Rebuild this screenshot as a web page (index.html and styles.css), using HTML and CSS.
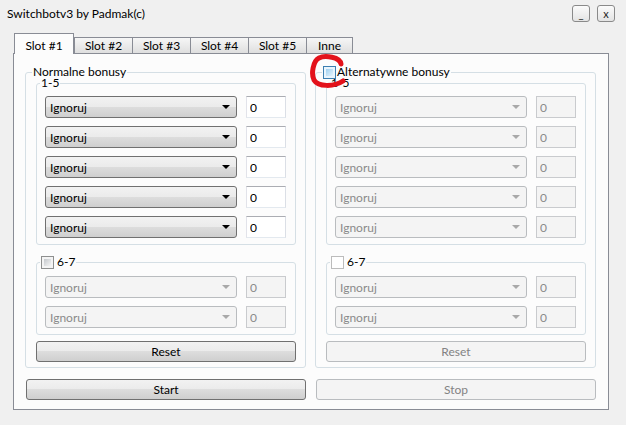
FILE: index.html
```html
<!DOCTYPE html>
<html lang="pl">
<head>
    <meta charset="UTF-8">
    <title>Switchbotv3 by Padmak(c)</title>
    <link rel="stylesheet" href="styles.css">
</head>
<body>
    <div class="titlebar">
        <span class="title">Switchbotv3 by Padmak(c)</span>
        <div class="win-buttons">
            <button class="win-btn">_</button>
            <button class="win-btn">x</button>
        </div>
    </div>

    <div class="tabs">
        <div class="tab active">Slot #1</div>
        <div class="tab">Slot #2</div>
        <div class="tab">Slot #3</div>
        <div class="tab">Slot #4</div>
        <div class="tab">Slot #5</div>
        <div class="tab short">Inne</div>
    </div>

    <div class="panel">
        <!-- Normal bonuses -->
        <div class="column">
            <fieldset class="group">
                <legend>Normalne bonusy</legend>
                <fieldset class="group sub">
                    <legend>1-5</legend>
                    <div class="row"><div class="combo">Ignoruj</div><input class="num" value="0"></div>
                    <div class="row"><div class="combo">Ignoruj</div><input class="num" value="0"></div>
                    <div class="row"><div class="combo">Ignoruj</div><input class="num" value="0"></div>
                    <div class="row"><div class="combo">Ignoruj</div><input class="num" value="0"></div>
                    <div class="row"><div class="combo">Ignoruj</div><input class="num" value="0"></div>
                </fieldset>
                <fieldset class="group sub extra">
                    <legend><span class="check"></span>6-7</legend>
                    <div class="row"><div class="combo off">Ignoruj</div><input class="num" value="0" disabled></div>
                    <div class="row"><div class="combo off">Ignoruj</div><input class="num" value="0" disabled></div>
                </fieldset>
                <button class="btn">Reset</button>
            </fieldset>
            <button class="btn wide">Start</button>
        </div>

        <!-- Alternative bonuses -->
        <div class="column">
            <fieldset class="group">
                <legend class="tight"><span class="check hover"><svg class="mark" width="36" height="34" viewBox="0 0 36 34"><path d="M31 10 C30 3 15 1 9 4 C3 7 1 20 4 26 C8 33 24 33 33 27" fill="none" stroke="#e3121b" stroke-width="5" stroke-linecap="round"/></svg></span>Alternatywne bonusy</legend>
                <fieldset class="group sub">
                    <legend>1-5</legend>
                    <div class="row"><div class="combo off">Ignoruj</div><input class="num" value="0" disabled></div>
                    <div class="row"><div class="combo off">Ignoruj</div><input class="num" value="0" disabled></div>
                    <div class="row"><div class="combo off">Ignoruj</div><input class="num" value="0" disabled></div>
                    <div class="row"><div class="combo off">Ignoruj</div><input class="num" value="0" disabled></div>
                    <div class="row"><div class="combo off">Ignoruj</div><input class="num" value="0" disabled></div>
                </fieldset>
                <fieldset class="group sub extra">
                    <legend><span class="check off"></span>6-7</legend>
                    <div class="row"><div class="combo off">Ignoruj</div><input class="num" value="0" disabled></div>
                    <div class="row"><div class="combo off">Ignoruj</div><input class="num" value="0" disabled></div>
                </fieldset>
                <button class="btn" disabled>Reset</button>
            </fieldset>
            <button class="btn wide" disabled>Stop</button>
        </div>
    </div>
</body>
</html>
```

FILE: styles.css
```css
* {
    box-sizing: border-box;
}

body {
    margin: 0;
    width: 626px;
    height: 425px;
    overflow: hidden;
    background-color: #f0f0f0;
    font-family: Lato, "Liberation Sans", sans-serif;
    font-size: 12px;
    color: #000;
}

.titlebar {
    display: flex;
    justify-content: space-between;
    align-items: center;
    height: 27px;
    padding: 0 11px 0 7px;
}

.win-buttons {
    display: flex;
    gap: 7px;
}

.win-btn {
    width: 18px;
    height: 17px;
    padding: 0;
    border: 1px solid #8a8a8a;
    border-radius: 3px;
    background: linear-gradient(#fbfbfb, #e4e4e4);
    font: inherit;
    font-size: 11px;
    line-height: 13px;
    color: #222;
}

.tabs {
    display: flex;
    align-items: flex-end;
    height: 26px;
    padding-left: 14px;
}

.tab {
    width: 59px;
    height: 16px;
    margin-left: -1px;
    border: 1px solid #898c95;
    border-bottom: none;
    background: linear-gradient(#f6f6f6, #dfdfdf);
    line-height: 15px;
    text-align: center;
}

.tab.active {
    position: relative;
    z-index: 1;
    width: 60px;
    height: 21px;
    margin: 0 1px -1px 0;
    padding-top: 4px;
    background: #fcfcfc;
}

.tab.short {
    width: 47px;
}

.panel {
    display: grid;
    grid-template-columns: 281px 281px;
    column-gap: 9px;
    width: 596px;
    margin-left: 13px;
    padding: 12px 12px 9px 11px;
    border: 1px solid #898c95;
    background: #fcfcfc;
}

.column {
    display: flex;
    flex-direction: column;
}

.group {
    min-width: 0;
    margin: 0;
    padding: 0 9px 5px 10px;
    border: 1px solid #d5dfe5;
    border-radius: 3px;
}

.group > legend {
    display: flex;
    align-items: center;
    gap: 3px;
    height: 12px;
    margin-left: -4px;
    padding: 0 1px;
    line-height: 12px;
}

.group > legend.tight {
    gap: 0;
}

.group.sub {
    margin-top: -1px;
    padding: 7px 8px 6px 8px;
}

.group.sub > legend {
    margin-left: -5px;
}

.group.extra {
    margin-top: 10px;
    padding-top: 7px;
}

.group.extra > legend {
    height: 14px;
}

.row {
    display: flex;
    gap: 9px;
}

.row + .row {
    margin-top: 8px;
}

.combo {
    display: flex;
    justify-content: space-between;
    align-items: center;
    width: 192px;
    height: 22px;
    padding: 0 6px 0 4px;
    border: 1px solid #707070;
    border-radius: 3px;
    background: linear-gradient(#f2f2f2 0%, #ebebeb 50%, #dddddd 50%, #cfcfcf 100%);
}

.combo::after {
    content: "";
    border-left: 4px solid transparent;
    border-right: 4px solid transparent;
    border-top: 4px solid #000;
}

.combo.off {
    border-color: #b9bcbf;
    background: #f4f4f4;
    color: #8a8a8a;
}

.combo.off::after {
    border-top-color: #a8a8a8;
}

.num {
    width: 40px;
    height: 22px;
    padding: 0 0 0 3px;
    border: 1px solid #abadb3;
    border-color: #abadb3 #dbdfe6 #e3e9ef #e2e3ea;
    background: #fff;
    font: inherit;
    color: #000;
}

.num:disabled {
    border-color: #c9cbce;
    background: #f4f4f4;
    color: #8a8a8a;
}

.btn {
    width: 100%;
    height: 21px;
    padding: 0;
    border: 1px solid #707070;
    border-radius: 3px;
    background: linear-gradient(#f2f2f2 0%, #ebebeb 50%, #dddddd 50%, #cfcfcf 100%);
    font: inherit;
    color: #000;
}

.group > .btn {
    margin-top: 6px;
}

.btn.wide {
    width: 280px;
    margin: 11px 0 0 1px;
}

.btn:disabled {
    border-color: #b9bcbf;
    background: #f4f4f4;
    color: #838383;
}

.check {
    position: relative;
    flex: none;
    width: 13px;
    height: 13px;
    padding: 2px;
    border: 1px solid #8e8f8f;
    background: linear-gradient(135deg, #c4c8cc, #f5f5f5) content-box, #f4f4f4;
}

.check.hover {
    margin-right: 1px;
    border-color: #3c7fb1;
    background: linear-gradient(135deg, #9fd0f1, #e4f3fc) content-box, #e9f5fd;
}

.check.off {
    border-color: #bcbcbc;
    background: #fff;
}

.mark {
    position: absolute;
    left: -14px;
    top: -13px;
    z-index: 2;
}
```
